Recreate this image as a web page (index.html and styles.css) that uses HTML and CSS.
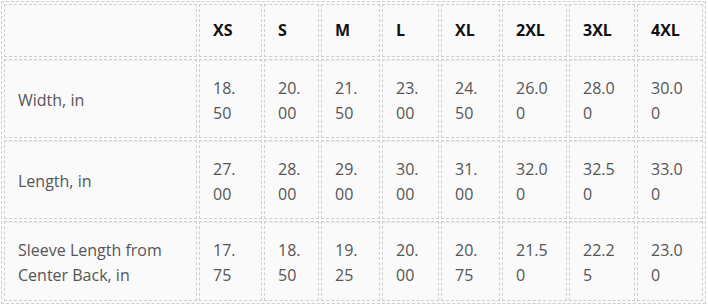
FILE: index.html
```html
<!DOCTYPE html>
<html lang="en">
  <head>
    <meta charset="UTF-8" />
    <meta name="viewport" content="width=device-width, initial-scale=1.0" />
    <title>Size Chart</title>
    <link rel="stylesheet" href="styles.css">
  </head>
  <body>
    <table class="size-chart">
      <colgroup>
        <col class="col-label" />
        <col class="col-xs" />
        <col class="col-s" />
        <col class="col-m" />
        <col class="col-l" />
        <col class="col-xl" />
        <col class="col-2xl" />
        <col class="col-3xl" />
        <col class="col-4xl" />
      </colgroup>
      <thead>
        <tr>
          <th></th>
          <th>XS</th>
          <th>S</th>
          <th>M</th>
          <th>L</th>
          <th>XL</th>
          <th>2XL</th>
          <th>3XL</th>
          <th>4XL</th>
        </tr>
      </thead>
      <tbody>
        <tr>
          <td class="label">Width, in</td>
          <td>18.50</td>
          <td>20.00</td>
          <td>21.50</td>
          <td>23.00</td>
          <td>24.50</td>
          <td>26.00</td>
          <td>28.00</td>
          <td>30.00</td>
        </tr>
        <tr>
          <td class="label">Length, in</td>
          <td>27.00</td>
          <td>28.00</td>
          <td>29.00</td>
          <td>30.00</td>
          <td>31.00</td>
          <td>32.00</td>
          <td>32.50</td>
          <td>33.00</td>
        </tr>
        <tr class="last">
          <td class="label">Sleeve Length from Center Back, in</td>
          <td>17.75</td>
          <td>18.50</td>
          <td>19.25</td>
          <td>20.00</td>
          <td>20.75</td>
          <td>21.50</td>
          <td>22.25</td>
          <td>23.00</td>
        </tr>
      </tbody>
    </table>
  </body>
</html>
```

FILE: styles.css
```css
html,
body {
  margin: 0;
  padding: 0;
  background: #fff;
}

/* Size chart table */
.size-chart {
  margin: 1px;
  width: 705px;
  table-layout: fixed;
  border-collapse: separate;
  border-spacing: 2px;
  border: 1px dashed #cfcfcf;
  background: #fafafa;
  font-family: "Open Sans", "Noto Sans", sans-serif;
  font-size: 16px;
  line-height: 25px;
}

.size-chart .col-label { width: 193px; }
.size-chart .col-xs { width: 63px; }
.size-chart .col-s { width: 55px; }
.size-chart .col-m { width: 59px; }
.size-chart .col-l { width: 57px; }
.size-chart .col-xl { width: 59px; }
.size-chart .col-2xl { width: 65px; }
.size-chart .col-3xl { width: 66px; }
.size-chart .col-4xl { width: 66px; }

.size-chart th,
.size-chart td {
  box-sizing: border-box;
  padding: 0 13px;
  border: 1px dashed #cfcfcf;
  text-align: left;
  vertical-align: middle;
  word-break: break-all;
}

.size-chart th {
  height: 53px;
  font-weight: 700;
  color: #111;
}

.size-chart td {
  height: 79px;
  padding-top: 4px;
  color: #555;
  box-shadow: inset 0 1px 0 #ececec;
}

/* narrower text box so the XS values wrap after the dot */
.size-chart td:nth-child(2) {
  padding-right: 20px;
}

.size-chart td.label {
  word-break: normal;
}

.size-chart tr.last td {
  height: 80px;
}
```
